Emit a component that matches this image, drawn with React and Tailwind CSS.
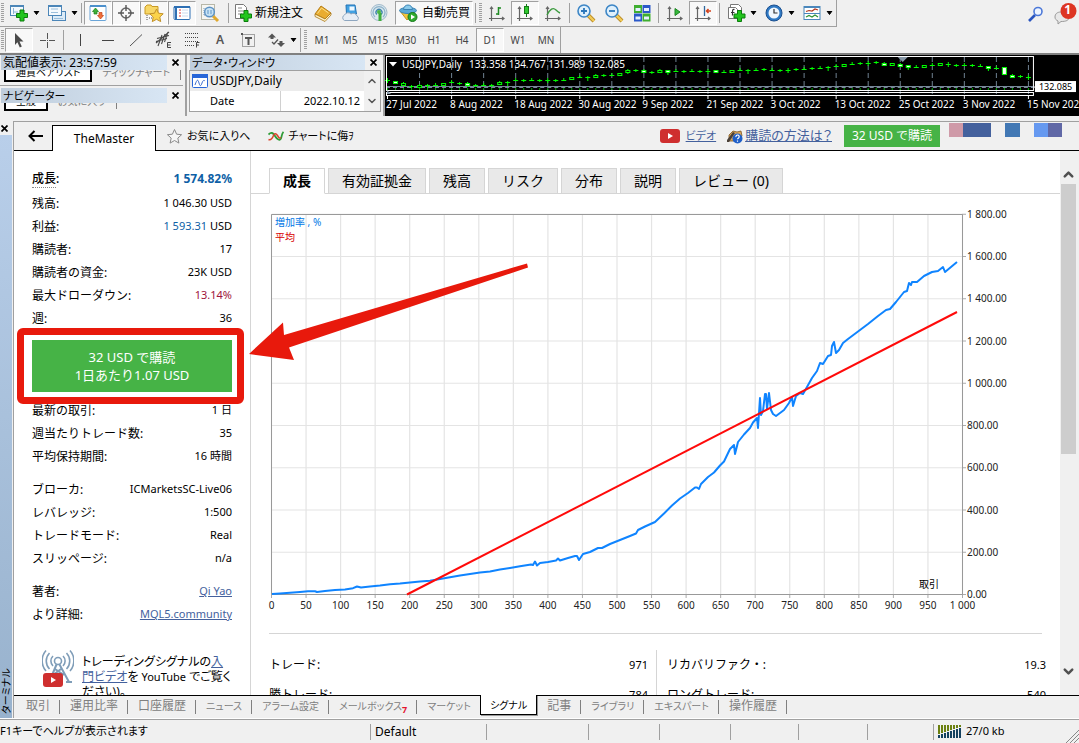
import React from "react";
import { ChevronDown, ChevronUp } from "lucide-react";

/* ---------- small toolbar drawings ---------- */

const Svg = ({ children, w = 20, h = 20 }) => (
  <svg width={w} height={h} viewBox={`0 0 ${w} ${h}`} className="shrink-0" aria-hidden="true">{children}</svg>
);

const Plus = ({ x, y }) => (
  <path d={`M${x + 3.5} ${y}h4v3.5h3.5v4h-3.5v3.5h-4v-3.5h-3.5v-4h3.5z`} fill="#22c51d" stroke="#0b7d0c" />
);

const NewChartIcon = () => (
  <Svg>
    <rect x="1.5" y="2.5" width="13" height="10" fill="#f4f9fd" stroke="#4c86b8" />
    <path d="M1 3h14" stroke="#4c86b8" strokeWidth="2" />
    <path d="M4.500 5v6M4 9h5" stroke="#8bb4d6" />
    <Plus x={7.5} y={7} />
  </Svg>
);
const WindowsIcon = () => (
  <Svg>
    <rect x="5.500" y="8.500" width="13" height="9" fill="#dcebf7" stroke="#4c86b8" />
    <rect x="1.500" y="2.500" width="13" height="10" fill="#f4f9fd" stroke="#4c86b8" />
    <path d="M1 3h14" stroke="#4c86b8" strokeWidth="2" />
    <path d="M4 6h7M4 9.500h7M7 15.500h9" stroke="#9bbfdc" />
  </Svg>
);
const MarketIcon = () => (
  <Svg>
    <rect x="2" y="2.500" width="16" height="15" rx="1" fill="#fff" stroke="#6aa5d8" />
    <path d="M2 3h16" stroke="#4c90cc" strokeWidth="2" />
    <path d="M7.500 5l3 3.500h-1.500v2.500h-3V8.500H4.500z" fill="#3fb13b" stroke="#1c7f1b" strokeWidth=".7" />
    <path d="M12.500 16l-3-3.500h1.500V9.500h3v3h1.500z" fill="#f0703c" stroke="#c0421a" strokeWidth=".7" />
  </Svg>
);
const TargetIcon = () => (
  <Svg>
    <circle cx="10" cy="10" r="5" fill="none" stroke="#666" strokeWidth="1.500" />
    <path d="M10 2v6M10 12v6M2 10h6M12 10h6" stroke="#555" strokeWidth="1.400" />
  </Svg>
);
const FolderStarIcon = () => (
  <Svg>
    <path d="M1 4l2-2h4l1 1.500h6V11H1z" fill="#f7d767" stroke="#c99a25" />
    <path d="M3 12v6M5 15h5" stroke="#555" strokeDasharray="1 1" />
    <path d="M12.500 6l2 4.200 4.700.6-3.400 3.200.9 4.600-4.200-2.300-4.200 2.300.9-4.600L5.800 10.800l4.700-.6z" fill="#fbd34a" stroke="#c2922a" />
  </Svg>
);
const TerminalIcon = () => (
  <Svg>
    <rect x="2" y="3.500" width="16" height="13" rx="1" fill="#fff" stroke="#2d6fb3" />
    <path d="M2 4h16M4 4v12" stroke="#2d6fb3" strokeWidth="2" />
    <path d="M7 7h2M7 10h2M7 13h2" stroke="#d33" strokeWidth="1.200" />
    <path d="M10 7h6M10 10h6M10 13h6" stroke="#c9dbee" />
  </Svg>
);
const TesterIcon = () => (
  <Svg>
    <rect x="1.500" y="1.500" width="13" height="15" fill="#f6f6f2" stroke="#b7b7a8" />
    <path d="M4 12V5M4 12h8M12 5v7" stroke="#7b98b4" strokeDasharray="1 1" />
    <path d="M13 13l5 5" stroke="#e0a92e" strokeWidth="3" />
    <circle cx="9.500" cy="9" r="4.800" fill="#bfe0f7" fillOpacity=".85" stroke="#5e93c4" strokeWidth="1.500" />
    <path d="M8 7v4M11 7v4" stroke="#5e93c4" />
  </Svg>
);
const OrderIcon = () => (
  <Svg>
    <path d="M2.500 1.500h8l3 3v11h-11z" fill="#fff" stroke="#777" />
    <path d="M5 5h4M5 8h6M5 11h4" stroke="#888" />
    <Plus x={7.5} y={7.5} />
  </Svg>
);
const BookIcon = () => (
  <Svg>
    <path d="M2 11l6-8 10 7-6 6z" fill="#e9ac2f" stroke="#b67d14" />
    <path d="M2 11v2.500l10 5 6-6.500v-2l-6 6z" fill="#fff3c8" stroke="#a87312" strokeWidth=".8" />
    <path d="M4.500 10.500l4-5.500 7 5" stroke="#fbdf88" fill="none" />
  </Svg>
);
const ServerIcon = () => (
  <Svg>
    <path d="M5 2h9l1.500 9h-10z" fill="#3fa1e3" stroke="#2273b5" />
    <rect x="8.500" y="3.500" width="5" height="4" fill="#eef8ff" />
    <path d="M3.500 17.500a3 3 0 010-5.500 4 4 0 016.500-1 4 4 0 016 2 2.500 2.500 0 010 4.500z" fill="#e6edf5" stroke="#8ea6bf" />
  </Svg>
);
const SignalIcon = () => (
  <Svg>
    <circle cx="10" cy="9.500" r="8" fill="#dbe8ef" stroke="#a0b9ca" />
    <path d="M6 14a6 6 0 118 0" fill="none" stroke="#8fb3ca" strokeWidth="1.300" />
    <path d="M7.800 11.500a3 3 0 114.400 0" fill="none" stroke="#4285ad" strokeWidth="1.300" />
    <path d="M11 10v8" stroke="#3fae3b" strokeWidth="3" />
    <circle cx="10" cy="9" r="2" fill="#49b645" />
  </Svg>
);
const AutoIcon = () => (
  <Svg>
    <path d="M2 8l7 9 8-8z" fill="#f2c53c" stroke="#c79320" />
    <ellipse cx="10" cy="7.500" rx="8.500" ry="3" fill="#5aa9d6" stroke="#3a83b4" />
    <path d="M5.500 6.500a4.500 4.500 0 019 0z" fill="#8acbec" stroke="#3a83b4" />
    <circle cx="14.500" cy="14" r="4.500" fill="#2faa2e" stroke="#16791a" />
    <path d="M13 11.500l4 2.500-4 2.500z" fill="#fff" />
  </Svg>
);
const Axis = () => (
  <path d="M4.500 4v14M2 15.500h15M3 6l1.500-2L6 6M15 14l2 1.500-2 1.500" fill="none" stroke="#666" strokeWidth="1.200" />
);
const BarsIcon = () => (
  <Svg><Axis /><path d="M11.500 4v8M11.500 5h2.500M9 11h2.500" stroke="#1f8a23" strokeWidth="1.500" /></Svg>
);
const CandleIcon = () => (
  <Svg><Axis /><path d="M11.500 1v13" stroke="#157a18" /><rect x="9.500" y="3.500" width="4" height="7" fill="#30c92f" stroke="#157a18" /></Svg>
);
const LineIcon = () => (
  <Svg><Axis /><path d="M4 12c3-6 6-8 9-5 1 1 2 2 4 3" fill="none" stroke="#3b9b3e" strokeWidth="1.400" /></Svg>
);
const ZoomIcon = ({ plus }) => (
  <Svg>
    <path d="M12 12l6 6" stroke="#b98a23" strokeWidth="4" />
    <path d="M12 12l6 6" stroke="#f2cb57" strokeWidth="2.400" />
    <circle cx="8" cy="8" r="6" fill="#dff0fc" stroke="#3d86c6" strokeWidth="1.600" />
    <path d={plus ? "M5 8h6M8 5v6" : "M5 8h6"} stroke="#2b76ba" strokeWidth="1.800" />
  </Svg>
);
const TilesIcon = () => (
  <Svg>
    <rect x="2" y="2" width="8" height="8" fill="#3fae2f" /><rect x="10.500" y="2" width="8" height="8" fill="#2b59c9" />
    <rect x="2" y="10.500" width="8" height="8" fill="#2b59c9" /><rect x="10.500" y="10.500" width="8" height="8" fill="#3fae2f" />
    <path d="M3.500 6.500h5M12 6.500h5M3.500 15h5M12 15h5" stroke="#e6f0ff" strokeWidth="3" />
  </Svg>
);
const ScrollIcon = () => (
  <Svg><Axis /><path d="M10 5.500l5 3.500-5 3.500z" fill="#35b83a" stroke="#1c8522" /></Svg>
);
const ShiftIcon = () => (
  <Svg><Axis /><path d="M11.500 3v10" stroke="#31679d" strokeWidth="1.300" /><path d="M18 8h-4.500M15.500 6L13.500 8l2 2" fill="none" stroke="#d2431e" strokeWidth="1.500" /></Svg>
);
const IndicatorIcon = () => (
  <Svg>
    <path d="M4.500 1.500h8l3 3v9h-11z" fill="#fff" stroke="#777" />
    <path d="M2.500 4.500h7l2 2v9h-9z" fill="#fff" stroke="#777" />
    <path d="M8.500 6.500c-2-.5-2 1-2 2.500v3.500M5 9.500h3.500" fill="none" stroke="#333" strokeWidth="1.200" />
    <Plus x={8} y={7.5} />
  </Svg>
);
const ClockIcon = () => (
  <Svg>
    <circle cx="10" cy="10" r="8" fill="#2f79c4" stroke="#1b4f8f" />
    <circle cx="10" cy="10" r="5.500" fill="#f0f7fd" />
    <path d="M10 6v4h3.500" fill="none" stroke="#333" strokeWidth="1.200" />
  </Svg>
);
const TemplateIcon = () => (
  <Svg>
    <rect x="2" y="3.500" width="16" height="13" fill="#fff" stroke="#4a87bb" />
    <path d="M2 4h16" stroke="#4a87bb" strokeWidth="2" />
    <path d="M2 10.500h16" stroke="#4a87bb" />
    <path d="M4 8.500l3-1 3 .5 3-2 3 1" fill="none" stroke="#b2361d" strokeWidth="1.200" />
    <path d="M4 14l3-1.500 3 1.500 3-2 3 2" fill="none" stroke="#2f9433" strokeWidth="1.200" />
  </Svg>
);

const CursorIcon = () => (
  <Svg><path d="M6 3l8.500 8.500h-4l2.300 5-2 1-2.400-5.200L6 15z" fill="#4a4a4a" /></Svg>
);
const CrossIcon = () => (
  <Svg><path d="M10.500 3v6M10.500 12v6M3 10.500h6M12 10.500h6M10 10.500h1" stroke="#555" /></Svg>
);
const VLineIcon = () => <Svg><path d="M10.500 4v12" stroke="#444" /></Svg>;
const HLineIcon = () => <Svg><path d="M4 10.500h12" stroke="#444" /></Svg>;
const DiagIcon = () => <Svg><path d="M4 16L16 4.500" stroke="#555" /></Svg>;
const ChannelIcon = () => (
  <Svg>
    <path d="M2 13L15 2M3 8.500l12-3M2 11.500l11-3M4 16L8 5M7.500 14L11 4M10.500 12l3.500-10" stroke="#4a4a4a" strokeWidth="1.100" />
    <path d="M17 12.500h-3.500v5H17M13.500 15h3" stroke="#444" fill="none" />
  </Svg>
);
const FiboIcon = () => (
  <Svg>
    <path d="M3 3.500h14M3 7.500h14M3 11.500h14M3 15.500h9" stroke="#444" strokeDasharray="1 1" />
    <path d="M17.500 12.500h-3v5M14.500 15h2.500" stroke="#444" fill="none" />
  </Svg>
);
const LabelIcon = () => (
  <Svg>
    <rect x="4.500" y="4.500" width="12" height="12" fill="none" stroke="#555" strokeDasharray="1 1" />
    <path d="M7 8h7M10.500 8v7" stroke="#555" strokeWidth="2" />
    <rect x="3" y="3" width="2" height="2" fill="#555" />
  </Svg>
);
const ShapesIcon = () => (
  <Svg>
    <path d="M6 3.500l4 4H2zM4.500 7.500h3V9h-3z" fill="#555" />
    <path d="M6 12l2 2 4-4.500" stroke="#555" strokeWidth="1.300" fill="none" />
    <path d="M11 13h8l-4 4zM13.500 11h3v2h-3z" fill="#555" />
  </Svg>
);

const Grip = () => (
  <span className="mx-px h-5 w-[3px] shrink-0 bg-[repeating-linear-gradient(to_bottom,#a0a0a0_0px,#a0a0a0_1px,#f0f0f0_1px,#f0f0f0_2px)]" />
);
const Sep = () => <span className="mx-0.5 h-5 w-px shrink-0 bg-[#a0a0a0]" />;
const Caret = () => (
  <svg width="7" height="4" viewBox="0 0 7 4" className="ml-1 shrink-0" aria-hidden="true"><path d="M1 0h5L3.500 3.500z" stroke="#000" /></svg>
);

const Tool = ({ label, pressed, caret, children }) => (
  <button
    aria-label={label}
    className={
      "flex h-6 shrink-0 items-center justify-center " +
      (caret ? "w-[38px] " : "w-7 ") +
      (pressed ? "border border-r-white border-b-white border-l-[#a0a0a0] border-t-[#a0a0a0] bg-[#f8f8f8]" : "")
    }
  >
    {children}
    {caret && <Caret />}
  </button>
);

const Period = ({ children, pressed }) => (
  <button
    className={
      "flex h-6 w-7 shrink-0 items-center justify-center text-[10px] text-[#444] " +
      (pressed ? "border border-r-white border-b-white border-l-[#a0a0a0] border-t-[#a0a0a0] bg-[#f8f8f8]" : "")
    }
  >
    {children}
  </button>
);

const Toolbars = () => (
  <header className="flex flex-col border-b-2 border-[#808080]">
    <div className="flex h-[27px] items-stretch">
      <div className="flex items-center border-r border-b border-[#a0a0a0]">
        <Grip />
        <Tool label="新規チャート" caret><NewChartIcon /></Tool>
        <Tool label="ウィンドウ" caret><WindowsIcon /></Tool>
        <span className="mr-0.5 h-5 w-px bg-[#a0a0a0]" />
        <Tool label="気配値表示" pressed><MarketIcon /></Tool>
        <Tool label="データウィンドウ" pressed><TargetIcon /></Tool>
        <Tool label="ナビゲーター" pressed><FolderStarIcon /></Tool>
        <Tool label="ターミナル" pressed><TerminalIcon /></Tool>
        <Tool label="ストラテジーテスター"><TesterIcon /></Tool>
        <span className="mx-1 h-5 w-px bg-[#a0a0a0]" />
        <button className="flex h-6 w-[76px] shrink-0 items-center gap-0.5 text-xs whitespace-nowrap"><OrderIcon />新規注文</button>
        <Tool label="メタエディター"><BookIcon /></Tool>
        <Tool label="サーバー"><ServerIcon /></Tool>
        <Tool label="シグナル"><SignalIcon /></Tool>
        <button className="ml-0.5 flex h-6 w-[78px] shrink-0 items-center gap-1 border border-t-[#a0a0a0] border-r-white border-b-white border-l-[#a0a0a0] bg-[#f8f8f8] pl-0.5 text-xs whitespace-nowrap">
          <AutoIcon />自動売買
        </button>
        <Sep />
        <Grip />
        <Tool label="バーチャート"><BarsIcon /></Tool>
        <Tool label="ローソク足" pressed><CandleIcon /></Tool>
        <Tool label="ラインチャート"><LineIcon /></Tool>
        <Sep />
        <Tool label="拡大"><ZoomIcon plus /></Tool>
        <Tool label="縮小"><ZoomIcon /></Tool>
        <Tool label="整列"><TilesIcon /></Tool>
        <Sep />
        <Tool label="自動スクロール"><ScrollIcon /></Tool>
        <Tool label="チャートシフト" pressed><ShiftIcon /></Tool>
        <Sep />
        <Tool label="インディケータ" caret><IndicatorIcon /></Tool>
        <Tool label="時間軸" caret><ClockIcon /></Tool>
        <Tool label="定型チャート" caret><TemplateIcon /></Tool>
      </div>
      <div className="flex flex-1 items-center justify-end gap-1.5 pr-0.5">
        <button aria-label="検索">
          <Svg>
            <path d="M2 17l6-6" stroke="#2a55c0" strokeWidth="2.600" />
            <circle cx="11" cy="7.500" r="4" fill="#eef5ff" stroke="#4c78d8" strokeWidth="1.600" />
          </Svg>
        </button>
        <button aria-label="通知" className="relative">
          <svg width="24" height="24" viewBox="0 0 24 24">
            <path d="M8 10c-4 0-6 2-6 5 0 2 1 3 3 4v3l3-2.500c5 0 8-1 8-4.500s-4-5-8-5z" fill="#e8e8e8" stroke="#999" />
            <circle cx="15.500" cy="9" r="8" fill="#dd3523" />
          </svg>
          <span className="absolute top-0 right-1.5 text-xs font-bold text-white">1</span>
        </button>
      </div>
    </div>
    <div className="flex h-[26px] items-stretch">
      <div className="flex items-center border-r border-[#a0a0a0]">
        <Grip />
        <Tool label="カーソル" pressed><CursorIcon /></Tool>
        <Tool label="クロスヘア"><CrossIcon /></Tool>
        <Sep />
        <Tool label="垂直線"><VLineIcon /></Tool>
        <Tool label="水平線"><HLineIcon /></Tool>
        <Tool label="トレンドライン"><DiagIcon /></Tool>
        <Tool label="チャネル"><ChannelIcon /></Tool>
        <Tool label="フィボナッチ"><FiboIcon /></Tool>
        <Tool label="テキスト"><span className="text-xs font-semibold text-[#555]">A</span></Tool>
        <Tool label="ラベル"><LabelIcon /></Tool>
        <Tool label="矢印" caret><ShapesIcon /></Tool>
        <span className="mr-0.5 h-6 w-px bg-[#a0a0a0]" />
        <Grip />
        <Period>M1</Period><Period>M5</Period><Period>M15</Period><Period>M30</Period>
        <Period>H1</Period><Period>H4</Period><Period pressed>D1</Period><Period>W1</Period><Period>MN</Period>
      </div>
    </div>
  </header>
);

/* ---------- docked panels ---------- */

const CloseX = ({ label }) => (
  <button aria-label={label} className="flex w-4 shrink-0 items-center justify-center">
    <svg width="7" height="7" viewBox="0 0 7 7"><path d="M.5.5l6 6M6.500.5l-6 6" stroke="#000" strokeWidth="1.700" /></svg>
  </button>
);

const PanelTitle = ({ children, close }) => (
  <div className="flex h-[15px] shrink-0 pl-px">
    <h2 className="flex-1 overflow-hidden bg-linear-to-r from-[#bfcddc] to-[#d8e6f4] pl-0.5 text-xs leading-[15px] whitespace-nowrap">{children}</h2>
    <CloseX label={close} />
  </div>
);

const Docks = () => (
  <div className="flex w-[187px] shrink-0 flex-col border-r-2 border-[#a0a0a0] pr-0.5">
    <PanelTitle close="気配値表示を閉じる">気配値表示: 23:57:59</PanelTitle>
    <div className="flex h-4 items-start overflow-hidden border-b border-[#a0a0a0] pl-1 text-[10px] whitespace-nowrap [font-feature-settings:'palt']">
      <button className="-mt-2 h-5 shrink-0 border-2 border-t-0 border-black bg-white px-2.5 leading-5">通貨ペアリスト</button>
      <button className="-mt-2 h-5 shrink-0 px-2.5 leading-5 text-[#808080]">ティックチャート</button>
      <span className="h-2.5 w-px bg-[#808080]" />
    </div>
    <div className="mt-0.5 flex flex-col">
      <PanelTitle close="ナビゲーターを閉じる"><span className="text-[11px] [font-feature-settings:'palt']">ナビゲーター</span></PanelTitle>
      <div className="flex h-2 items-start overflow-hidden pl-1 text-[10px] whitespace-nowrap [font-feature-settings:'palt']">
        <button className="-mt-3 h-5 shrink-0 border-2 border-t-0 border-black bg-white px-2.5 leading-5">全般</button>
        <button className="-mt-3 h-5 shrink-0 px-2.5 leading-5 text-[#808080]">お気に入り</button>
        <span className="h-1.5 w-px bg-[#808080]" />
      </div>
    </div>
  </div>
);

const DataWindow = () => (
  <div className="flex w-[198px] shrink-0 flex-col border-r-2 border-[#a0a0a0] pr-0.5 pl-0.5">
    <PanelTitle close="データ・ウィンドウを閉じる">
      <span className="text-[11px] [font-feature-settings:'palt']">データ・ウィンドウ</span>
    </PanelTitle>
    <div className="flex h-[42px] overflow-hidden border border-[#a0a0a0]">
      <table className="flex-1 border-collapse text-[11px] leading-5">
        <tbody>
          <tr className="h-5 bg-[#ececec]">
            <th colSpan={2} className="text-left text-xs leading-5 font-normal">
              <span className="flex items-center gap-0.5 pl-0.5">
                <svg width="16" height="14" viewBox="0 0 16 14">
                  <rect x=".5" y=".5" width="15" height="13" rx="1" fill="#fff" stroke="#2866d8" />
                  <path d="M0 2h16" stroke="#2866d8" strokeWidth="4" />
                  <path d="M3 11c2-6 3-6 4-2s2 3 3 0 2-3 3-2" fill="none" stroke="#3d6ed0" />
                </svg>
                USDJPY,Daily
              </span>
            </th>
          </tr>
          <tr className="h-5 border-b border-[#d0d0d0] bg-white">
            <td className="w-[90px] border-r border-[#d0d0d0] pl-5">Date</td>
            <td className="pr-1 text-right">2022.10.12</td>
          </tr>
        </tbody>
      </table>
      <div className="flex w-4 flex-col items-center justify-between py-1">
        <ChevronUp size={12} strokeWidth={3} color="#555" />
        <ChevronDown size={12} strokeWidth={3} color="#555" />
      </div>
    </div>
  </div>
);

const CANDLES = [
  80, 82, 84, 86, 86, 85, 85, 84, 82, 83, 84, 85, 85, 85, 83, 82, 80, 80, 80, 80, 80, 80, 80, 78, 77, 77, 76,
  75, 75, 74, 71, 70, 71, 72, 71, 71, 71, 71, 71, 71, 71, 71, 72, 71, 70, 70, 70, 69, 70, 70, 70, 69, 69, 68,
  68, 67, 66, 65, 64, 63, 63, 62, 64, 64, 65, 66, 67, 66, 65, 64, 64, 65, 65, 65, 66, 67, 68, 70, 76, 76, 77,
];
const WHITE_BODIES = [1, 10, 32, 35, 41, 62, 64, 65, 75, 77, 78];
const HOLLOW_BODIES = [2, 4, 7, 14, 23, 26, 29, 30, 34, 43, 57, 63, 67, 69];
const DATES = ["27 Jul 2022", "8 Aug 2022", "18 Aug 2022", "30 Aug 2022", "9 Sep 2022", "21 Sep 2022", "3 Oct 2022", "13 Oct 2022", "25 Oct 2022", "3 Nov 2022", "15 Nov 2022"];

const PriceChart = () => (
  <div className="min-w-0 flex-1 bg-black">
    <svg viewBox="386 55 693 61" preserveAspectRatio="xMinYMin slice" className="h-full w-full" role="img" aria-label="USDJPY,Daily">
      {Array.from({ length: 20 }, (_, i) => (
        <path key={i} d={`M${420.500 + i * 32} 57V95`} stroke="#6f8191" strokeDasharray="5 3" />
      ))}
      <path d="M387 86.500H1033" stroke="#778899" />
      <path d="M387 87.500H1033" stroke="#778899" strokeDasharray="4 3" />
      {CANDLES.map((y, i) => {
        const x = 388.500 + i * 8;
        const white = WHITE_BODIES.includes(i);
        const tall = i === 77;
        return (
          <g key={i} stroke="#00ff00">
            <path d={`M${x} ${y - (i % 2 ? 1 : 2)}v${i % 5 === 0 ? 5 : 3}`} />
            <path d={`M${x} 88v2`} stroke="#00a800" />
            {white || HOLLOW_BODIES.includes(i) ? (
              <rect x={x - 2} y={tall ? 67.5 : y - 0.5} width="4" height={tall ? 7 : 2} fill={white ? "#fff" : "#000"} />
            ) : (
              <path d={`M${x - 2.5} ${y + 0.5}h5`} />
            )}
          </g>
        );
      })}
      <path d="M898 57h10l-5 5z" fill="#8595a5" />
      <path d="M387.500 56.500H1033.500V90.500H387.500zM387.500 92.500H1033.500V95.500H387.500z" fill="none" stroke="#fff" />
      <path d="M388 90v4h4z" fill="#8595a5" />
      {DATES.map((d, i) => (
        <g key={d}>
          <path d={`M${388.500 + i * 64} 95v4`} stroke="#fff" />
          <text x={387 + i * 64} y="108" fontSize="10" fill="#fff">{d}</text>
        </g>
      ))}
      <path d="M390 62h8l-4 4.500z" fill="#fff" />
      <text x="403" y="68" fontSize="10" fill="#fff">USDJPY,Daily</text>
      <text x="470" y="68" fontSize="10" fill="#fff">133.358 134.767 131.989 132.085</text>
      <path d="M1034 87h2" stroke="#fff" />
      <rect x="1035" y="81" width="41" height="11" fill="#fff" />
      <text x="1039" y="90" fontSize="9" fill="#000">132.085</text>
    </svg>
  </div>
);

/* ---------- signal page ---------- */

const YouTube = ({ w = 20, h = 14 }) => (
  <svg width={w} height={h} viewBox="0 0 20 14" className="shrink-0" aria-hidden="true">
    <rect width="20" height="14" rx="3" fill="#cf2f2f" />
    <path d="M8 4l5 3-5 3z" fill="#fff" />
  </svg>
);

const PageHeader = () => (
  <div className="flex h-[29px] shrink-0">
    <div className="flex w-[38px] shrink-0 items-center justify-center border-b border-black">
      <button aria-label="戻る" className="ml-1">
        <svg width="15" height="12" viewBox="0 0 15 12"><path d="M1.500 6H15M6.500 1L1.500 6l5 5" fill="none" stroke="#000" strokeWidth="2" /></svg>
      </button>
    </div>
    <button className="mt-[3px] w-[104px] shrink-0 border border-b-0 border-black bg-white text-xs">TheMaster</button>
    <div className="flex flex-1 items-center border-b border-black pl-2.5 text-[11px] whitespace-nowrap">
      <a href="#favorite" className="flex items-center gap-1 [font-feature-settings:'palt']">
        <svg width="17" height="17" viewBox="0 0 17 17"><path d="M8.500 1.500l2.100 4.700 5 .5-3.800 3.400 1.100 5-4.400-2.600-4.400 2.600 1.100-5L1.400 6.700l5-.5z" fill="#f6f6f6" stroke="#8a8a8a" /></svg>
        お気に入りへ
      </a>
      <a href="#chart" className="ml-[18px] flex items-center gap-1 [font-feature-settings:'palt']">
        <svg width="16" height="11" viewBox="0 0 16 11">
          <path d="M.5 3.500C3 1 5 1.500 7 5s5 5 6 2.500S13.500 3 15.500.8" fill="none" stroke="#2d9c36" strokeWidth="1.800" />
          <path d="M.5 8.500c2.500 1 4-1.500 5-4s2.500-2.500 4 0 2 3 3.500 2" fill="none" stroke="#d9452c" strokeWidth="1.500" />
        </svg>
        チャートに侮ｦ
      </a>
      <div className="flex flex-1 items-center justify-end pr-[17px]">
        <YouTube />
        <a href="#video" className="ml-1.5 text-[#44619d] underline [font-feature-settings:'palt']">ビデオ</a>
        <svg width="17" height="15" viewBox="0 0 17 15" className="ml-2.5" aria-hidden="true">
          <path d="M3 6l4-4 4 1 4-1 1 5-5 5H3z" fill="#dba85c" stroke="#7e5522" strokeWidth=".8" />
          <path d="M1 11l6-8 2 1-6 9H1z" fill="#4a4038" />
          <circle cx="11.500" cy="9.500" r="5" fill="#1f5fc8" />
          <path d="M10 8a1.600 1.600 0 113 .3c0 .9-1.500 1-1.500 2M11.500 11.500v1.200" fill="none" stroke="#fff" strokeWidth="1.200" />
        </svg>
        <a href="#how" className="ml-0.5 text-[13px] text-[#44619d] underline [font-feature-settings:'palt']">購読の方法は？</a>
        <button className="ml-3 h-[22px] w-24 bg-[#46b346] text-xs text-white">32 USD で購読</button>
        <span className="mb-3 ml-[9px] flex h-3.5">
          <span className="w-3.5 bg-[#cf9aa8]" />
          <span className="w-7 bg-[#44619d]" />
          <span className="ml-3.5 w-[15px] bg-[#4278b4]" />
          <span className="ml-3.5 w-3.5 bg-[#6699f0]" />
          <span className="w-3.5 bg-[#6068a6]" />
        </span>
      </div>
    </div>
  </div>
);

const Row = ({ label, children }) => (
  <div className="flex h-[23px] items-center justify-between">
    <dt>{label}</dt>
    <dd className="text-[11px]">{children}</dd>
  </div>
);

const Sidebar = () => (
  <aside className="w-[237px] shrink-0 overflow-hidden border-r border-[#d5d5d5] pt-4 pr-[18px] pl-[18px] text-xs">
    <dl className="mb-2.5">
      <div className="mb-0.5 flex h-[23px] items-center justify-between">
        <dt className="font-medium"><span className="border-b border-dotted border-[#888]">成長</span>:</dt>
        <dd className="font-bold text-[#0e5fa6]">1 574.82%</dd>
      </div>
      <Row label="残高:">1 046.30 USD</Row>
      <Row label="利益:"><span className="text-[#0e5fa6]">1 593.31</span> USD</Row>
      <Row label="購読者:">17</Row>
      <Row label="購読者の資金:">23K USD</Row>
      <Row label="最大ドローダウン:"><span className="text-[#a0143c]">13.14%</span></Row>
      <Row label="週:">36</Row>
    </dl>
    <div className="relative">
      <button className="block h-[52px] w-full bg-[#46b346] text-center text-[13px] leading-[18px] text-white">
        32 USD で購読<br />1日あたり1.07 USD
      </button>
      <div className="pointer-events-none absolute -top-3 -right-3 -bottom-3 -left-[15px] z-10 rounded-md border-[7px] border-[#e8190c]" />
    </div>
    <dl className="mt-[7px]">
      <Row label="最新の取引:">1 日</Row>
      <Row label="週当たりトレード数:">35</Row>
      <Row label="平均保持期間:">16 時間</Row>
    </dl>
    <dl className="mt-2.5">
      <Row label="ブローカ:">ICMarketsSC-Live06</Row>
      <Row label="レバレッジ:">1:500</Row>
      <Row label="トレードモード:">Real</Row>
      <Row label="スリッページ:">n/a</Row>
    </dl>
    <dl className="mt-2.5">
      <Row label="著者:"><a href="#author" className="text-[#44619d] underline">Qi Yao</a></Row>
      <Row label="より詳細:"><a href="#mql5" className="text-[#44619d] underline">MQL5.community</a></Row>
    </dl>
    <div className="mt-[22px] flex gap-2 pl-2.5">
      <svg width="32" height="40" viewBox="0 0 32 40" className="shrink-0" aria-hidden="true">
        <g fill="none" stroke="#7f9db8" strokeWidth="1.600">
          <circle cx="16" cy="13" r="3.500" />
          <path d="M11 18a7 7 0 010-10M21 18a7 7 0 000-10M7.500 21a11.500 11.500 0 010-16M24.500 21a11.500 11.500 0 000-16M4 23a15.500 15.500 0 010-20.500M28 23a15.500 15.500 0 000-20.500" />
          <path d="M14.500 16.500L8 32M17.500 16.500L27 34M13 21l9 6M19 21l-8 6M24 34h6" strokeWidth="2" />
        </g>
        <rect x="1" y="25" width="20" height="14" rx="3" fill="#cf2f2f" />
        <path d="M9 29l5 3-5 3z" fill="#fff" />
      </svg>
      <p className="flex-1 pt-1.5 leading-[15px] whitespace-nowrap [font-feature-settings:'palt']">
        トレーディングシグナルの<a href="#intro" className="text-[#44619d] underline">入<br />門ビデオ</a>を <span className="text-[11px]">YouTube</span> でご覧く<br />ださい)。
      </p>
    </div>
  </aside>
);

const GROWTH =
  "272,594 280,593.500 290,592.800 300,592 308,591.200 315,591.200 317,592 325,591 335,590 345,589.500 353,588.200 357,586.500 361,587.500 370,586.500 380,585.500 390,584.200 400,583.500 410,582.500 420,581.500 430,580.800 440,579 450,577.200 460,575.500 470,574 480,572.500 490,571.500 500,569.500 510,568 520,566.300 531,564.500 533,565 535,561.500 537,565.500 540,563 548,562 556,560.500 558,558.500 560,560.500 568,558 575,556 577,556 579,560 583,554 590,552 598,548 602,548 610,544 620,540 630,536 636,533.500 638,530 645,526.500 655,522 664,513.500 672,505.500 680,498.500 688,493 695,487.500 697,487.500 699,489 701,484 708,477 714,472.500 720,465.500 724,461.500 730,449 734,445 735,454 738,442 744,434.500 750,428 753,422.500 757,418 758,428 760,398 761,415 763,411 765,394 766,394 767,409 769,393 771,410 773,414 776,416 780,413 784,410 789,403 792,397 793,406 796,396 800,393 803,394 807,387 812,378 817,371 820,363 823,364 828,356 831,355 832,346 834,342 836,353 839,350 843,343 848,339 856,333 864,327 868,324 878,316 886,310 890,309 896,302 904,292 907,291 909,283 911,285 912,282 917,282 924,276 932,272 938,271 943,267 945,272 951,267 957,262";
const X_LABELS = ["0", "50", "100", "150", "200", "250", "300", "350", "400", "450", "500", "550", "600", "650", "700", "750", "800", "850", "900", "950", "1 000"];
const Y_LABELS = ["0.00", "200.00", "400.00", "600.00", "800.00", "1 000.00", "1 200.00", "1 400.00", "1 600.00", "1 800.00"];

const GrowthChart = () => (
  <svg viewBox="264 205 790 410" className="block h-auto w-full" role="img" aria-label="増加率">
    {X_LABELS.map((l, i) => {
      const x = 271.5 + i * 34.55;
      return (
        <g key={l}>
          <path d={`M${x} 214V594`} stroke="#e4e4e4" strokeWidth="1.200" />
          <path d={`M${x} 594v4`} stroke="#aaa" />
          <text x={x} y="609" fontSize="10" textAnchor="middle" fill="#222">{l}</text>
        </g>
      );
    })}
    {Y_LABELS.map((l, i) => {
      const y = 594.5 - i * 42.25;
      return (
        <g key={l}>
          <path d={`M272 ${y}H962`} stroke="#e4e4e4" strokeWidth="1.200" />
          <path d={`M962 ${y}h4`} stroke="#aaa" />
          <text x="967" y={y + 3.5} fontSize="10" fill="#222">{l}</text>
        </g>
      );
    })}
    <path d="M271.500 214.500H962.500V594.500H271.500z" fill="none" stroke="#999" />
    <polyline points={GROWTH} fill="none" stroke="#0f84ff" strokeWidth="2" strokeLinejoin="round" />
    <path d="M407 594.500L957 312" stroke="#ff0a0a" strokeWidth="2" />
    <text x="275" y="226" fontSize="10" fill="#0077e6">増加率 , %</text>
    <text x="275" y="241" fontSize="10" fill="#d80000">平均</text>
    <text x="919" y="588" fontSize="10" fill="#000">取引</text>
  </svg>
);

const Tab = ({ children, active }) => (
  <button
    className={
      "h-[26px] border px-[13px] text-sm leading-5 " +
      (active ? "border-[#d5d5d5] border-b-white bg-white font-bold" : "border-[#d5d5d5] bg-[#e9e9e9]")
    }
  >
    {children}
  </button>
);

const Stat = ({ label, value }) => (
  <div className="flex h-[30px] items-center justify-between">
    <dt>{label}</dt>
    <dd className="text-[11px]">{value}</dd>
  </div>
);

const Content = () => (
  <main className="min-w-0 flex-1 overflow-hidden">
    <div className="mt-[17px] flex h-[26px] items-stretch gap-[3px] pl-[18px] shadow-[inset_0_-1px_#d5d5d5]">
      <Tab active>成長</Tab>
      <Tab>有効証拠金</Tab>
      <Tab>残高</Tab>
      <Tab>リスク</Tab>
      <Tab>分布</Tab>
      <Tab>説明</Tab>
      <Tab>レビュー (0)</Tab>
    </div>
    <div className="mt-[11px] pr-1.5 pl-[13px]"><GrowthChart /></div>
    <div className="mt-[18px] mr-[18px] ml-[18px] border-t border-[#d5d5d5]" />
    <div className="mt-4 mr-3.5 ml-[18px] flex text-xs">
      <dl className="flex-1 pr-2">
        <Stat label="トレード:" value="971" />
        <Stat label="勝トレード:" value="784" />
      </dl>
      <dl className="flex-1 border-l border-[#d5d5d5] pl-2.5">
        <Stat label="リカバリファク・:" value="19.3" />
        <Stat label="ロングトレード:" value="540" />
      </dl>
    </div>
  </main>
);

const BOTTOM_LEFT = [["取引"], ["運用比率"], ["口座履歴"], ["ニュース", 1], ["アラーム設定", 1], ["メールボックス", 1], ["マーケット", 1]];
const BOTTOM_RIGHT = [["記事"], ["ライブラリ", 1], ["エキスパート", 1], ["操作履歴"]];

const BottomTab = ({ name, kana, last }) => (
  <div className="flex border-t border-black">
    <button className={"flex h-5 items-center pr-[9px] pl-2.5 text-[#808080] " + (kana ? "text-[10px]" : "text-xs")}>
      {name}
      {name === "メールボックス" && <span className="self-end text-[9px] leading-3 font-bold text-[#e3122c]">7</span>}
    </button>
    {!last && <span className="mt-1 h-3.5 w-px bg-[#808080]" />}
  </div>
);

const BottomTabs = () => (
  <nav className="flex h-[23px] shrink-0 whitespace-nowrap [font-feature-settings:'palt']">
    <span className="w-0.5 border-t border-black" />
    {BOTTOM_LEFT.map(([n, kana], i) => <BottomTab key={n} name={n} kana={kana} last={i === 6} />)}
    <button className="h-5 border border-t-0 border-black bg-white px-[9px] text-[10px] leading-4 shadow-[1px_1px_#999]">シグナル</button>
    {BOTTOM_RIGHT.map(([n, kana]) => <BottomTab key={n} name={n} kana={kana} />)}
    <span className="flex-1 border-t border-black" />
  </nav>
);

const Terminal = () => (
  <section className="relative flex min-h-0 flex-1 border-b border-white pt-[5px]">
    <div className="flex w-3.5 shrink-0 flex-col border-r border-[#a0a0a0] pr-px">
      <div className="-ml-1 flex h-3.5 shrink-0 items-center justify-center"><CloseX label="ターミナルを閉じる" /></div>
      <h2 className="flex flex-1 rotate-180 items-center bg-linear-to-t from-[#b9cfea] to-[#98b2cd] pt-1 text-[10px] leading-3 [font-feature-settings:'palt'] [text-orientation:sideways] [writing-mode:vertical-rl]">
        <span className="self-start">ターミナル</span>
      </h2>
    </div>
    <div className="flex min-w-0 flex-1 flex-col border-t border-[#a0a0a0]">
      <PageHeader />
      <div className="flex min-h-0 flex-1 bg-white">
        <Sidebar />
        <Content />
        <div className="flex w-[17px] shrink-0 flex-col items-center bg-[#f0f0f0] pt-4 pb-4">
          <ChevronUp size={15} strokeWidth={4} color="#505050" className="shrink-0" />
          <div className="mt-0.5 h-[270px] w-[15px] bg-[#cdcdcd]" />
          <span className="flex-1" />
          <ChevronDown size={15} strokeWidth={4} color="#505050" className="shrink-0" />
        </div>
        <span className="w-0.5 bg-[#f0f0f0]" />
      </div>
      <BottomTabs />
    </div>
    <svg width="280" height="100" viewBox="249 262 280 100" className="pointer-events-none absolute top-[146px] left-[249px] z-20" aria-hidden="true">
      <path d="M527 263.500L528 267.500L289 347.500L294 360L249 354L283 322.500L284 335z" fill="#e8190c" />
    </svg>
  </section>
);

const StatusBar = () => (
  <footer className="flex h-6 shrink-0 items-center border-t border-[#a0a0a0] text-[11px]">
    <p className="w-[370px] [font-feature-settings:'palt']">F1キーでヘルプが表示されます</p>
    <p className="h-4 w-[116px] border-l border-[#a0a0a0] pl-1 text-xs leading-4">Default</p>
    <span className="h-4 w-[102px] border-l border-[#a0a0a0]" />
    <span className="h-4 w-[71px] border-l border-[#a0a0a0]" />
    <span className="h-4 w-[71px] border-l border-[#a0a0a0]" />
    <span className="h-4 w-[68px] border-l border-[#a0a0a0]" />
    <span className="h-4 w-[69px] border-l border-[#a0a0a0]" />
    <span className="h-4 w-[66px] border-l border-[#a0a0a0]" />
    <p className="flex h-4 flex-1 items-center gap-1 border-l border-[#a0a0a0] pl-1">
      <svg width="24" height="13" viewBox="0 0 24 13" aria-hidden="true">
        {Array.from({ length: 8 }, (_, i) => (
          <g key={i}>
            <path d={`M${i * 3 + 1} 0V${9 - i}`} stroke="#6b8010" strokeWidth="2" />
            <path d={`M${i * 3 + 1} ${10 - i}V13`} stroke="#15425f" strokeWidth="2" />
          </g>
        ))}
      </svg>
      27/0 kb
    </p>
    <svg width="14" height="14" viewBox="0 0 14 14" className="self-end" aria-hidden="true">
      <path d="M1 14L14 1M5 14l9-9M9 14l5-5" stroke="#888" />
    </svg>
  </footer>
);

export default function App() {
  return (
    <div className="flex h-screen flex-col overflow-hidden bg-[#f0f0f0] font-['Noto_Sans','Noto_Sans_CJK_JP',sans-serif] text-black">
      <Toolbars />
      <div className="flex h-[61px] shrink-0">
        <Docks />
        <DataWindow />
        <PriceChart />
      </div>
      <Terminal />
      <StatusBar />
    </div>
  );
}
